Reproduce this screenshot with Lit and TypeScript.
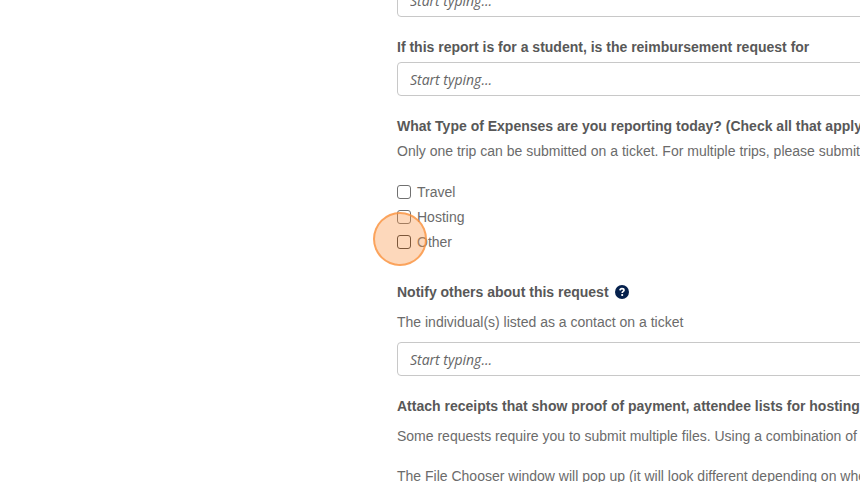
import { LitElement, html, css } from "lit";
import { customElement, property } from "lit/decorators.js";

@customElement("app-root")
export class AppRoot extends LitElement {
  @property({ type: Array }) expenses = ["Travel", "Hosting", "Other"];

  static styles = css`
    :host {
      display: block;
      height: 100vh;
      overflow: hidden;
      background: #fff;
      color: #6b6b6b;
      font: 14px/20px "Liberation Sans", Arial, sans-serif;
    }
    .form {
      margin: -17px -40px 0 397px;
      white-space: nowrap;
    }
    .group {
      margin: 0 0 20px;
      padding: 0;
      border: 0;
      min-width: 0;
    }
    .label {
      display: block;
      padding: 0;
      color: #585858;
      font-weight: 700;
    }
    .box {
      display: block;
      box-sizing: border-box;
      width: 100%;
      height: 34px;
      padding: 0 12px;
      border: 1px solid #c8c8c8;
      border-radius: 4px;
      background: #fff;
      color: #555;
      font: italic 14px/20px "Open Sans", "Noto Sans", sans-serif;
    }
    .box::placeholder {
      color: #666;
      opacity: 1;
    }
    .label + .box {
      margin-top: 5px;
    }
    .hint {
      margin: 10px 0;
    }
    .hint.close {
      margin: 5px 0 18px;
    }
    .hint.wide {
      margin: 10px 0 20px;
    }
    .choice {
      position: relative;
      display: flex;
      align-items: center;
      gap: 6px;
      width: max-content;
      height: 25px;
    }
    .choices {
      margin-bottom: 28px;
    }
    .tick {
      appearance: none;
      box-sizing: border-box;
      width: 14px;
      height: 14px;
      margin: 0;
      border: 1px solid #707070;
      border-radius: 3px;
      background: #fff;
    }
    .choice:has(.pointer) .tick {
      border-color: #333;
    }
    .heading {
      display: flex;
      align-items: center;
      gap: 6px;
    }
    .help {
      width: 14px;
      height: 14px;
      padding: 0;
      border: 0;
      background: none;
    }
    .help svg {
      display: block;
    }
    .pointer {
      position: absolute;
      left: -24px;
      top: -17px;
      box-sizing: border-box;
      width: 54px;
      height: 54px;
      border: 2px solid rgba(250, 145, 60, 0.75);
      border-radius: 50%;
      background: rgba(250, 150, 70, 0.37);
      pointer-events: none;
    }
  `;

  render() {
    return html`
      <form class="form">
        <div class="group">
          <input class="box" type="text" placeholder="Start typing..." aria-label="Requester" />
        </div>
        <div class="group">
          <label class="label" for="student">If this report is for a student, is the reimbursement request for</label>
          <input class="box" id="student" type="text" placeholder="Start typing..." />
        </div>
        <fieldset class="group choices">
          <legend class="label">What Type of Expenses are you reporting today? (Check all that apply)</legend>
          <p class="hint close">Only one trip can be submitted on a ticket. For multiple trips, please submit</p>
          ${this.expenses.map(
            (name) => html`<label class="choice">
              <input class="tick" type="checkbox" name="expense" value=${name} />${name}
              ${name === "Other" ? html`<span class="pointer"></span>` : null}
            </label>`
          )}
        </fieldset>
        <div class="group">
          <div class="heading">
            <label class="label" for="notify">Notify others about this request</label>
            <button class="help" type="button" aria-label="Help">
              <svg width="14" height="14" viewBox="0 0 14 14">
                <circle cx="7" cy="7" r="7" fill="#06214d" />
                <path d="M5 5.4C5.1 4.1 5.9 3.6 7 3.6C8.200 3.600 9 4.300 9 5.200C9 6.500 7.200 6.400 7.200 8" fill="none" stroke="#fff" stroke-width="1.700" />
                <rect x="6.200" y="9" width="2" height="1.900" rx="0.700" fill="#fff" />
              </svg>
            </button>
          </div>
          <p class="hint">The individual(s) listed as a contact on a ticket</p>
          <input class="box" id="notify" type="text" placeholder="Start typing..." />
        </div>
        <div class="group">
          <span class="label">Attach receipts that show proof of payment, attendee lists for hosting</span>
          <p class="hint wide">Some requests require you to submit multiple files. Using a combination of</p>
          <p class="hint wide">The File Chooser window will pop up (it will look different depending on whether</p>
        </div>
      </form>
    `;
  }
}
